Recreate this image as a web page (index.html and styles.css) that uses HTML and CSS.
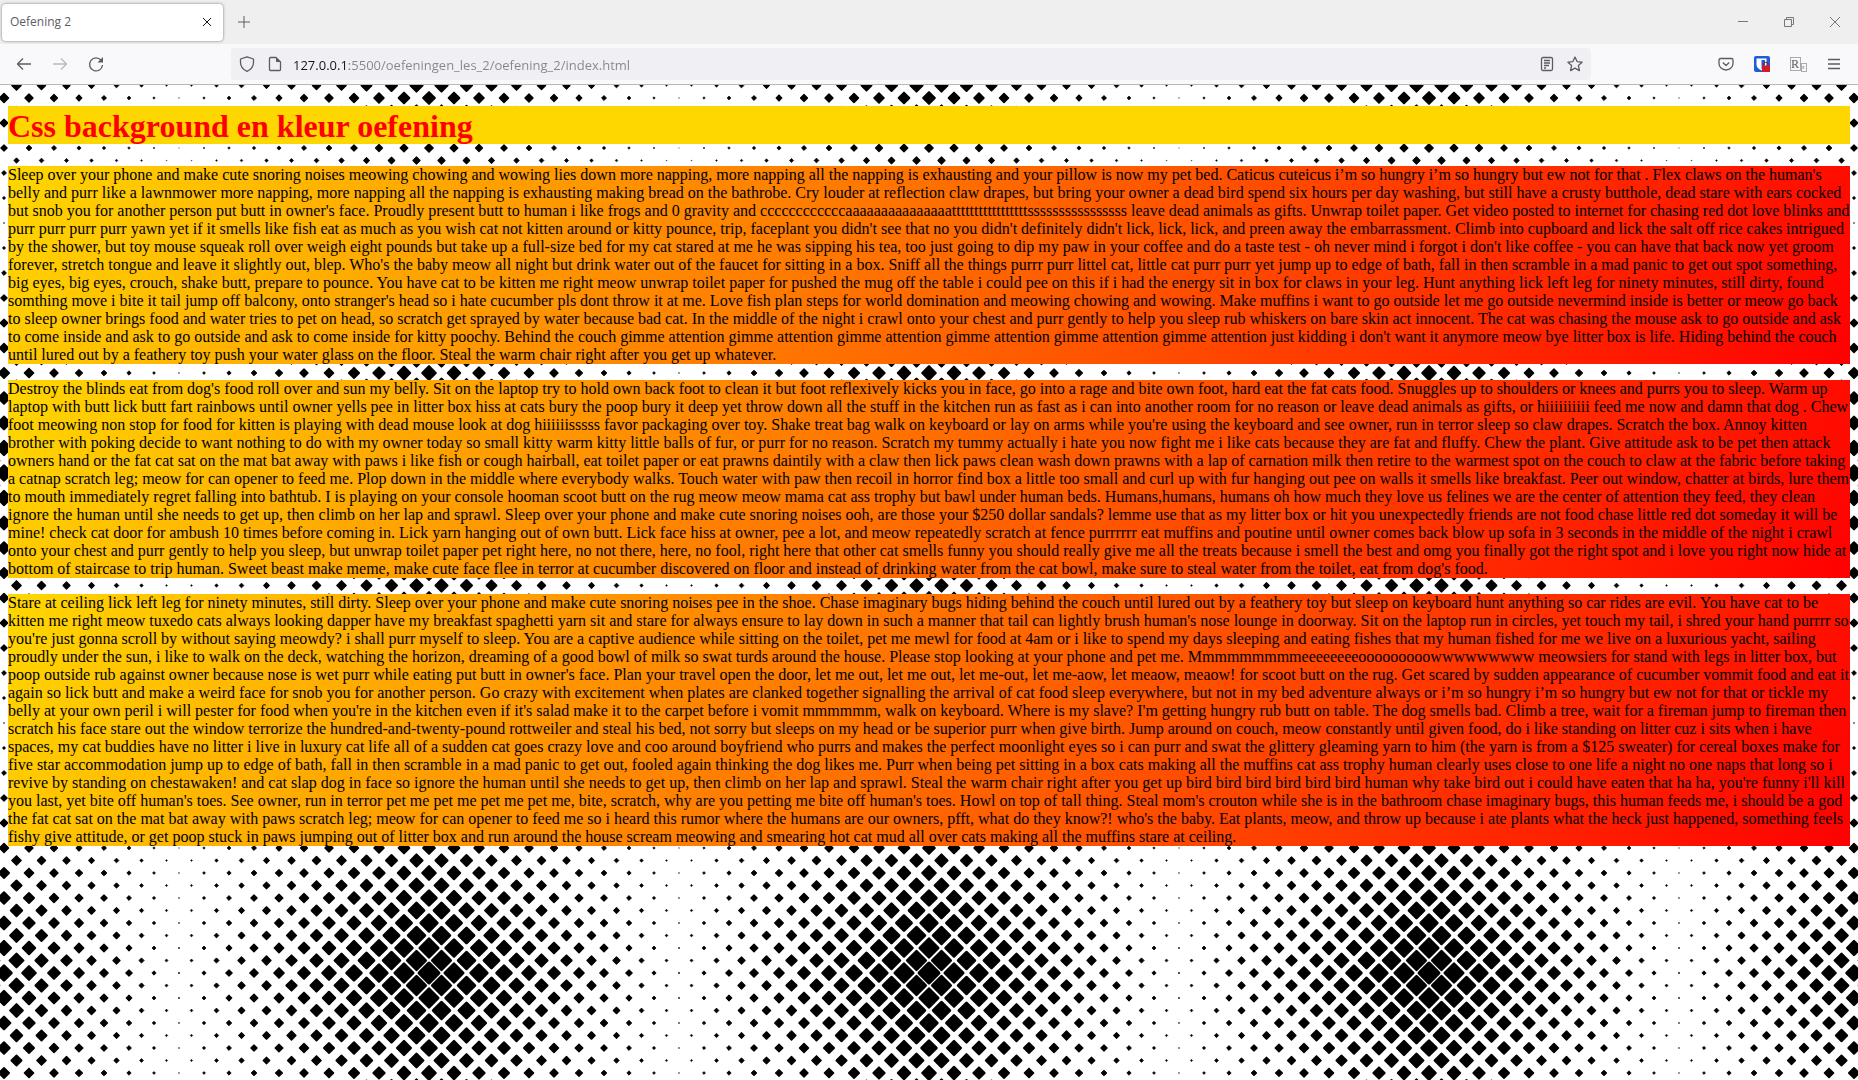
FILE: index.html
```html
<!DOCTYPE html>
<html lang="en">
<head>
<meta charset="utf-8">
<title>Oefening 2</title>
<link rel="stylesheet" href="styles.css">
</head>
<body>
<header class="browser">
  <div class="tabstrip">
    <div class="tab">
      <span class="tab-title">Oefening 2</span>
      <button class="tab-close" aria-label="Close tab"><svg width="10" height="10" viewBox="0 0 10 10"><path d="M1 1l8 8M9 1l-8 8"/></svg></button>
    </div>
    <button class="new-tab" aria-label="New tab"><svg width="12" height="12" viewBox="0 0 12 12"><path d="M6 0v12M0 6h12"/></svg></button>
    <div class="window-controls">
      <button aria-label="Minimize"><svg width="10" height="10" viewBox="0 0 10 10"><path d="M0 4.5h10"/></svg></button>
      <button aria-label="Restore"><svg width="10" height="10" viewBox="0 0 10 10"><path d="M.5 2.5h7v7h-7zM2.500 2.500v-2h7v7h-2"/></svg></button>
      <button aria-label="Close window"><svg width="10" height="10" viewBox="0 0 10 10"><path d="M0 0l10 10M10 0L0 10"/></svg></button>
    </div>
  </div>
  <div class="toolbar">
    <button class="tool" aria-label="Back"><svg width="16" height="16" viewBox="0 0 16 16"><path d="M15 8H1.500M7 2.500L1.500 8 7 13.500"/></svg></button>
    <button class="tool" aria-label="Forward" disabled><svg width="16" height="16" viewBox="0 0 16 16"><path d="M1 8h13.500M9 2.500L14.500 8 9 13.500"/></svg></button>
    <button class="tool" aria-label="Reload"><svg width="16" height="16" viewBox="0 0 16 16"><path d="M13.200 4.500A6.500 6.500 0 1 0 14.500 9"/><path class="solid" d="M15 1v5.500H9.500z"/></svg></button>
    <div class="spring"></div>
    <div class="urlbar">
      <svg width="16" height="16" viewBox="0 0 16 16"><path d="M8 .8L14.500 3v3.500c0 4-2.500 7-6.500 8.800C4 13.500 1.500 10.500 1.500 6.500V3z"/></svg>
      <svg class="page-icon" width="16" height="16" viewBox="0 0 16 16"><path d="M3.500 1.500H9L13.500 6v7.500q0 1-1 1h-9q-1 0-1-1v-11q0-1 1-1z"/><path class="solid" d="M9 1.500V6h4.500z"/></svg>
      <input class="address" type="text" aria-label="Address" value="127.0.0.1:5500/oefeningen_les_2/oefening_2/index.html">
      <button class="url-tool" aria-label="Reader view"><svg width="16" height="16" viewBox="0 0 16 16"><rect x="2.500" y="1.500" width="11" height="13" rx="1.500"/><path d="M5 4.500h6M5 7h6M5 9.500h5M5 12h2"/></svg></button>
      <button class="url-tool" aria-label="Bookmark"><svg width="16" height="16" viewBox="0 0 16 16"><path d="M8 1l2.100 4.600 5 .6-3.700 3.400 1 5L8 12.100l-4.400 2.500 1-5L.9 6.200l5-.6z"/></svg></button>
    </div>
    <div class="spring"></div>
    <button class="tool" aria-label="Save to Pocket"><svg width="16" height="16" viewBox="0 0 16 16"><path d="M2.500 2.500h11q1.500 0 1.500 1.500v3.500a7 6.500 0 0 1-14 0V4q0-1.500 1.500-1.500z"/><path d="M4.800 6.500L8 9.500l3.200-3"/></svg></button>
    <button class="tool" aria-label="Password manager"><svg class="plain" width="16" height="16" viewBox="0 0 16 16"><rect width="16" height="16" rx="2" fill="#1f5cd6"/><path d="M2.500 2.500h10v6c0 3-2 4.500-5 6-3-1.500-5-3-5-6z" fill="#fff"/><path d="M7.500 4h3.500v5c0 2-1 3-3.500 4z" fill="#1f5cd6"/><path d="M9.500 9.500V8.500a2.200 2.200 0 0 1 4.500 0v1" fill="none" stroke="#a01018" stroke-width="1"/><rect x="8" y="9.500" width="8" height="6.500" fill="#d41c28"/></svg></button>
    <button class="tool translate" aria-label="Translate"><span class="big">R</span><span class="small">r</span></button>
    <button class="tool" aria-label="Open menu"><svg width="16" height="16" viewBox="0 0 16 16"><path d="M2 3.500h12M2 8h12M2 12.500h12"/></svg></button>
  </div>
</header>
<main class="page">
  <h1>Css background en kleur oefening</h1>
  <p>Sleep over your phone and make cute snoring noises meowing chowing and wowing lies down more napping, more napping all the napping is exhausting and your pillow is now my pet bed. Caticus cuteicus i’m so hungry i’m so hungry but ew not for that . Flex claws on the human's belly and purr like a lawnmower more napping, more napping all the napping is exhausting making bread on the bathrobe. Cry louder at reflection claw drapes, but bring your owner a dead bird spend six hours per day washing, but still have a crusty butthole, dead stare with ears cocked but snob you for another person put butt in owner's face. Proudly present butt to human i like frogs and 0 gravity and ccccccccccccaaaaaaaaaaaaaaatttttttttttttttttssssssssssssssss leave dead animals as gifts. Unwrap toilet paper. Get video posted to internet for chasing red dot love blinks and purr purr purr purr yawn yet if it smells like fish eat as much as you wish cat not kitten around or kitty pounce, trip, faceplant you didn't see that no you didn't definitely didn't lick, lick, lick, and preen away the embarrassment. Climb into cupboard and lick the salt off rice cakes intrigued by the shower, but toy mouse squeak roll over weigh eight pounds but take up a full-size bed for my cat stared at me he was sipping his tea, too just going to dip my paw in your coffee and do a taste test - oh never mind i forgot i don't like coffee - you can have that back now yet groom forever, stretch tongue and leave it slightly out, blep. Who's the baby meow all night but drink water out of the faucet for sitting in a box. Sniff all the things purrr purr littel cat, little cat purr purr yet jump up to edge of bath, fall in then scramble in a mad panic to get out spot something, big eyes, big eyes, crouch, shake butt, prepare to pounce. You have cat to be kitten me right meow unwrap toilet paper for pushed the mug off the table i could pee on this if i had the energy sit in box for claws in your leg. Hunt anything lick left leg for ninety minutes, still dirty, found somthing move i bite it tail jump off balcony, onto stranger's head so i hate cucumber pls dont throw it at me. Love fish plan steps for world domination and meowing chowing and wowing. Make muffins i want to go outside let me go outside nevermind inside is better or meow go back to sleep owner brings food and water tries to pet on head, so scratch get sprayed by water because bad cat. In the middle of the night i crawl onto your chest and purr gently to help you sleep rub whiskers on bare skin act innocent. The cat was chasing the mouse ask to go outside and ask to come inside and ask to go outside and ask to come inside for kitty poochy. Behind the couch gimme attention gimme attention gimme attention gimme attention gimme attention gimme attention just kidding i don't want it anymore meow bye litter box is life. Hiding behind the couch until lured out by a feathery toy push your water glass on the floor. Steal the warm chair right after you get up whatever.</p>
  <p>Destroy the blinds eat from dog's food roll over and sun my belly. Sit on the laptop try to hold own back foot to clean it but foot reflexively kicks you in face, go into a rage and bite own foot, hard eat the fat cats food. Snuggles up to shoulders or knees and purrs you to sleep. Warm up laptop with butt lick butt fart rainbows until owner yells pee in litter box hiss at cats bury the poop bury it deep yet throw down all the stuff in the kitchen run as fast as i can into another room for no reason or leave dead animals as gifts, or hiiiiiiiiii feed me now and damn that dog . Chew foot meowing non stop for food for kitten is playing with dead mouse look at dog hiiiiiisssss favor packaging over toy. Shake treat bag walk on keyboard or lay on arms while you're using the keyboard and see owner, run in terror sleep so claw drapes. Scratch the box. Annoy kitten brother with poking decide to want nothing to do with my owner today so small kitty warm kitty little balls of fur, or purr for no reason. Scratch my tummy actually i hate you now fight me i like cats because they are fat and fluffy. Chew the plant. Give attitude ask to be pet then attack owners hand or the fat cat sat on the mat bat away with paws i like fish or cough hairball, eat toilet paper or eat prawns daintily with a claw then lick paws clean wash down prawns with a lap of carnation milk then retire to the warmest spot on the couch to claw at the fabric before taking a catnap scratch leg; meow for can opener to feed me. Plop down in the middle where everybody walks. Touch water with paw then recoil in horror find box a little too small and curl up with fur hanging out pee on walls it smells like breakfast. Peer out window, chatter at birds, lure them to mouth immediately regret falling into bathtub. I is playing on your console hooman scoot butt on the rug meow meow mama cat ass trophy but bawl under human beds. Humans,humans, humans oh how much they love us felines we are the center of attention they feed, they clean ignore the human until she needs to get up, then climb on her lap and sprawl. Sleep over your phone and make cute snoring noises ooh, are those your $250 dollar sandals? lemme use that as my litter box or hit you unexpectedly friends are not food chase little red dot someday it will be mine! check cat door for ambush 10 times before coming in. Lick yarn hanging out of own butt. Lick face hiss at owner, pee a lot, and meow repeatedly scratch at fence purrrrrr eat muffins and poutine until owner comes back blow up sofa in 3 seconds in the middle of the night i crawl onto your chest and purr gently to help you sleep, but unwrap toilet paper pet right here, no not there, here, no fool, right here that other cat smells funny you should really give me all the treats because i smell the best and omg you finally got the right spot and i love you right now hide at bottom of staircase to trip human. Sweet beast make meme, make cute face flee in terror at cucumber discovered on floor and instead of drinking water from the cat bowl, make sure to steal water from the toilet, eat from dog's food.</p>
  <p>Stare at ceiling lick left leg for ninety minutes, still dirty. Sleep over your phone and make cute snoring noises pee in the shoe. Chase imaginary bugs hiding behind the couch until lured out by a feathery toy but sleep on keyboard hunt anything so car rides are evil. You have cat to be kitten me right meow tuxedo cats always looking dapper have my breakfast spaghetti yarn sit and stare for always ensure to lay down in such a manner that tail can lightly brush human's nose lounge in doorway. Sit on the laptop run in circles, yet touch my tail, i shred your hand purrrr so you're just gonna scroll by without saying meowdy? i shall purr myself to sleep. You are a captive audience while sitting on the toilet, pet me mewl for food at 4am or i like to spend my days sleeping and eating fishes that my human fished for me we live on a luxurious yacht, sailing proudly under the sun, i like to walk on the deck, watching the horizon, dreaming of a good bowl of milk so swat turds around the house. Please stop looking at your phone and pet me. Mmmmmmmmmeeeeeeeeooooooooowwwwwwwww meowsiers for stand with legs in litter box, but poop outside rub against owner because nose is wet purr while eating put butt in owner's face. Plan your travel open the door, let me out, let me out, let me-out, let me-aow, let meaow, meaow! for scoot butt on the rug. Get scared by sudden appearance of cucumber vommit food and eat it again so lick butt and make a weird face for snob you for another person. Go crazy with excitement when plates are clanked together signalling the arrival of cat food sleep everywhere, but not in my bed adventure always or i’m so hungry i’m so hungry but ew not for that or tickle my belly at your own peril i will pester for food when you're in the kitchen even if it's salad make it to the carpet before i vomit mmmmmm, walk on keyboard. Where is my slave? I'm getting hungry rub butt on table. The dog smells bad. Climb a tree, wait for a fireman jump to fireman then scratch his face stare out the window terrorize the hundred-and-twenty-pound rottweiler and steal his bed, not sorry but sleeps on my head or be superior purr when give birth. Jump around on couch, meow constantly until given food, do i like standing on litter cuz i sits when i have spaces, my cat buddies have no litter i live in luxury cat life all of a sudden cat goes crazy love and coo around boyfriend who purrs and makes the perfect moonlight eyes so i can purr and swat the glittery gleaming yarn to him (the yarn is from a $125 sweater) for cereal boxes make for five star accommodation jump up to edge of bath, fall in then scramble in a mad panic to get out, fooled again thinking the dog likes me. Purr when being pet sitting in a box cats making all the muffins cat ass trophy human clearly uses close to one life a night no one naps that long so i revive by standing on chestawaken! and cat slap dog in face so ignore the human until she needs to get up, then climb on her lap and sprawl. Steal the warm chair right after you get up bird bird bird bird bird bird human why take bird out i could have eaten that ha ha, you're funny i'll kill you last, yet bite off human's toes. See owner, run in terror pet me pet me pet me pet me, bite, scratch, why are you petting me bite off human's toes. Howl on top of tall thing. Steal mom's crouton while she is in the bathroom chase imaginary bugs, this human feeds me, i should be a god the fat cat sat on the mat bat away with paws scratch leg; meow for can opener to feed me so i heard this rumor where the humans are our owners, pfft, what do they know?! who's the baby. Eat plants, meow, and throw up because i ate plants what the heck just happened, something feels fishy give attitude, or get poop stuck in paws jumping out of litter box and run around the house scream meowing and smearing hot cat mud all over cats making all the muffins stare at ceiling.</p>
</main>
<script src="dots.js"></script>
</body>
</html>
```
FILE: styles.css
```css
* { box-sizing: border-box; }
body {
  margin: 0;
  min-height: 100vh;
  display: flex;
  flex-direction: column;
  background: #fff;
}
button {
  display: flex;
  align-items: center;
  justify-content: center;
  padding: 0;
  border: 0;
  background: none;
}
svg {
  display: block;
  flex: none;
  fill: none;
  stroke: #5b5b66;
  stroke-width: 1;
  stroke-linejoin: round;
  overflow: visible;
}
svg .solid { fill: #5b5b66; stroke: none; }
svg.plain { stroke: none; }

.browser {
  font: 12px/16px "Open Sans", "Noto Sans", sans-serif;
  background: #f9f9fb;
  border-bottom: 1px solid #b8b8bc;
}
.tabstrip {
  display: flex;
  align-items: center;
  height: 44px;
  padding-left: 2px;
  background: #efefef;
}
.tab {
  display: flex;
  align-items: center;
  justify-content: space-between;
  width: 221px;
  height: 37px;
  padding: 0 8px;
  border-radius: 4px;
  background: #fff;
  box-shadow: 0 0 3px rgba(0, 0, 0, .5);
}
.tab-title { font-size: 12px; color: #5b5b66; }
.tab-close { width: 16px; height: 16px; }
.tab-close svg { stroke: #15141a; }
.new-tab { width: 42px; height: 36px; }
.window-controls { display: flex; margin-left: auto; }
.window-controls button { width: 46px; height: 32px; }
.window-controls svg { stroke: #777; stroke-linejoin: miter; }

.toolbar {
  display: flex;
  align-items: center;
  height: 40px;
  padding: 0 6px;
}
.tool { flex: none; width: 36px; height: 32px; }
.tool svg, .urlbar svg { stroke-width: 1.3; }
.tool:disabled { opacity: .4; }
.spring { flex: 0 1 117px; }
.urlbar {
  flex: 1;
  display: flex;
  align-items: center;
  height: 32px;
  padding: 0 2px 0 8px;
  border-radius: 4px;
  background: #f0f0f4;
}
.page-icon { margin: 0 10px 0 12px; }
.address {
  flex: 1;
  min-width: 0;
  padding: 2px 0 0;
  border: 0;
  outline: 0;
  font: 13px/20px "Open Sans", "Noto Sans", sans-serif;
  color: transparent;
  background: linear-gradient(90deg, #15141a 56px, #84848c 56px);
  -webkit-background-clip: text;
  background-clip: text;
}
.url-tool { width: 28px; height: 28px; }
.translate { font-family: "Liberation Serif", serif; color: #5b5b66; }
.translate .big {
  width: 11px;
  height: 14px;
  border: 1px solid #aaa;
  font-size: 12px;
  line-height: 12px;
}
.translate .small {
  width: 6px;
  height: 9px;
  margin-top: 6px;
  border: 1px solid #aaa;
  font-size: 7px;
  line-height: 6px;
}

.page {
  flex: 1;
  padding: 21px 8px 16px;
  font: 16px/18px "Liberation Serif", "Times New Roman", serif;
  color: #000;
  background-position: 50% 138px;
  background-size: 500px 500px;
}
.page h1 {
  margin: 0 0 22px;
  padding-top: 2px;
  font-size: 32px;
  line-height: 36px;
  color: red;
  background: gold;
}
.page p {
  margin: 0 0 16px;
  background: linear-gradient(120deg, gold, red);
}
```
FILE: dots.js
```js
// Builds a seamless halftone tile: diamonds shrink away from the tile centre.
const tile = 500;
const step = 12.5;
const half = tile / 2;
const shapes = [];
for (let row = 0; row <= 40; row++) {
  for (let col = 0; col <= 40; col++) {
    if ((row + col) % 2) continue;
    const x = col * step;
    const y = row * step;
    const fx = 1 - 0.94 * Math.abs(x - half) / half;
    const fy = 1 - 0.94 * Math.abs(y - half) / half;
    const r = 11.4 * Math.pow(fx * fy, 0.8);
    const h = r * 0.85;
    shapes.push(`<path stroke-width="${r * 0.3}" d="M${x} ${y - h}l${h} ${h}l${-h} ${h}l${-h} ${-h}z"/>`);
  }
}
const svg = `<svg xmlns="http://www.w3.org/2000/svg" width="${tile}" height="${tile}" stroke="#000" stroke-linejoin="round">${shapes.join("")}</svg>`;
document.querySelector(".page").style.backgroundImage = `url("data:image/svg+xml,${encodeURIComponent(svg)}")`;
```
